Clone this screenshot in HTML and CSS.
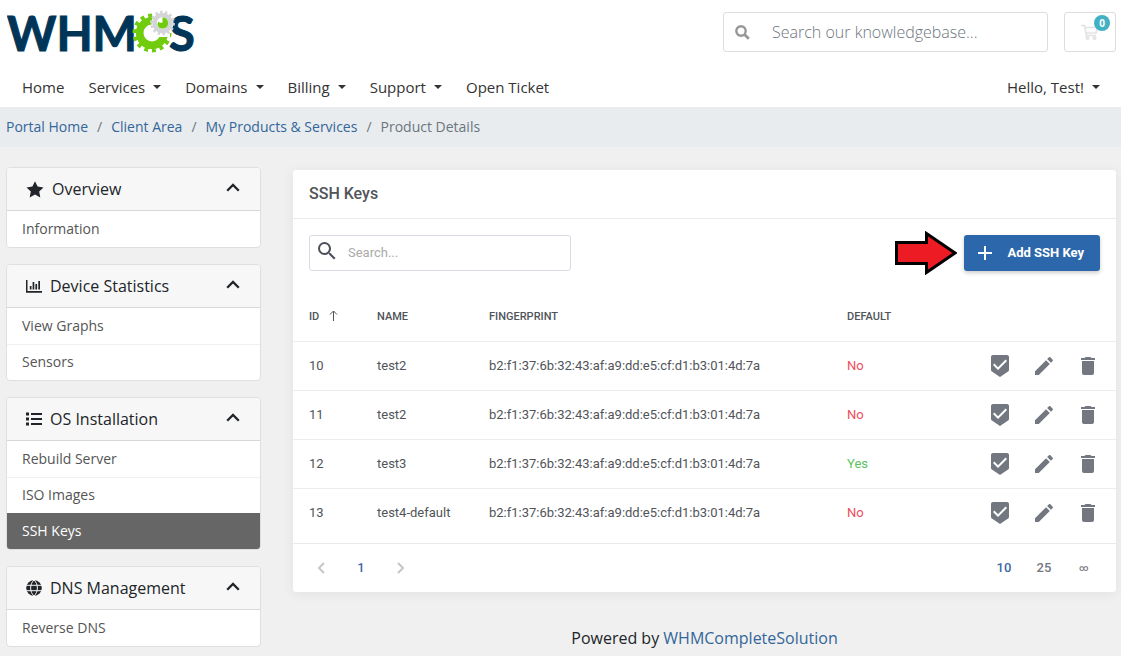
FILE: index.html
```html
<!DOCTYPE html>
<html lang="en">
<head>
<meta charset="utf-8">
<meta name="viewport" content="width=device-width, initial-scale=1">
<title>Product Details - SSH Keys</title>
<link rel="stylesheet" href="styles.css">
</head>
<body>
<svg class="sprite" aria-hidden="true">
  <symbol id="chevron-up" viewBox="0 0 14 9"><path d="M1.2 7.8 7 2l5.8 5.8" fill="none" stroke="currentColor" stroke-width="2.3"/></symbol>
  <symbol id="default" viewBox="0 0 24 24"><path d="M19 1H5c-1.1 0-1.99.9-1.99 2L3 15.93c0 .69.35 1.3.88 1.66L12 23l8.11-5.41c.53-.36.88-.97.88-1.66L21 3c0-1.1-.9-2-2-2zm-9 15l-5-5 1.41-1.41L10 13.17l7.59-7.59L19 7l-9 9z"/></symbol>
  <symbol id="pencil" viewBox="0 0 24 24"><path d="M20.71 7.04c.39-.39.39-1.04 0-1.41l-2.34-2.34c-.37-.39-1.02-.39-1.41 0l-1.84 1.83 3.75 3.75M3 17.25V21h3.75L17.81 9.93l-3.75-3.75L3 17.25z"/></symbol>
  <symbol id="trash" viewBox="0 0 24 24"><path d="M19 4h-3.5l-1-1h-5l-1 1H5v2h14M6 19a2 2 0 0 0 2 2h8a2 2 0 0 0 2-2V7H6v12z"/></symbol>
</svg>

<header class="header">
  <div class="topbar">
    <a class="logo" href="#" aria-label="WHMCS">
      <svg width="200" height="64" viewBox="0 -8 200 64">
        <text class="logo-text" x="0" y="43">WHM</text>
        <text class="logo-text" x="162" y="43">S</text>
        <g fill="none" stroke="#70cc0c">
          <circle cx="145" cy="25" r="12.3" stroke-width="7.6"/>
          <circle cx="145" cy="25" r="17" stroke-width="5" pathLength="28" stroke-dasharray="1 1"/>
        </g>
        <path d="M148 23h15v6h-13z" fill="#fff"/>
        <circle cx="155.500" cy="15" r="11" fill="#fff"/>
        <g fill="none" stroke="#d3d5d7">
          <circle cx="155.500" cy="15" r="8" stroke-width="4.600"/>
          <circle cx="155.500" cy="15" r="10.800" stroke-width="3.200" pathLength="28" stroke-dasharray="1 1"/>
        </g>
        <path d="M151 13.500q2 2 4.500 1V9.500a5.500 5.500 0 1 1-5 7.500z" fill="#70cc0c"/>
      </svg>
    </a>
    <div class="tools">
      <form class="kb-search">
        <button type="button" aria-label="Search">
          <svg width="15" height="15" viewBox="0 0 15 15" fill="none" stroke="#979797"><circle cx="6" cy="6" r="4.700" stroke-width="2.400"/><path d="m9.500 9.500 4.300 4.300" stroke-width="2.800"/></svg>
        </button>
        <input type="text" placeholder="Search our knowledgebase..." aria-label="Search our knowledgebase">
      </form>
      <a class="cart" href="#" aria-label="Shopping cart">
        <svg width="18" height="16" viewBox="0 0 18 16" fill="none" stroke="#e3e3e6" stroke-width="1.700"><path d="M0 1.500h3.500l2 10h9.500M4 3.500h12.500l-1.500 5.500H5.300"/><circle cx="6.500" cy="14" r="1.200"/><circle cx="13.500" cy="14" r="1.200"/></svg>
        <span class="badge">0</span>
      </a>
    </div>
  </div>
  <nav class="nav">
    <a href="#">Home</a>
    <a class="drop" href="#">Services</a>
    <a class="drop" href="#">Domains</a>
    <a class="drop" href="#">Billing</a>
    <a class="drop" href="#">Support</a>
    <a href="#">Open Ticket</a>
    <a class="drop account" href="#">Hello, Test!</a>
  </nav>
</header>

<nav aria-label="Breadcrumb">
  <ol class="breadcrumb">
    <li><a href="#">Portal Home</a></li>
    <li><a href="#">Client Area</a></li>
    <li><a href="#">My Products &amp; Services</a></li>
    <li>Product Details</li>
  </ol>
</nav>

<div class="layout">
  <aside class="sidebar">
    <section class="card">
      <button class="card-head" type="button">
        <svg width="18" height="17" viewBox="0 0 18 17"><path fill="currentColor" d="m9 .3 2.600 5.300 5.900.8-4.300 4.100 1.100 5.900L9 13.600l-5.300 2.800 1.100-5.900L.5 6.400l5.900-.8z"/></svg>
        <span>Overview</span>
        <svg class="chev" width="14" height="9"><use href="#chevron-up"/></svg>
      </button>
      <a class="item" href="#">Information</a>
    </section>
    <section class="card">
      <button class="card-head" type="button">
        <svg width="16" height="13" viewBox="0 0 16 13" fill="currentColor"><path d="M0 0h1.500v11H16v1.700H0zM3.800 6h1.700v3.500H3.800zM6.600 2h1.700v7.500H6.600zM9.400 4h1.700v5.500H9.400zM12.300 1H14v8.500h-1.700z"/></svg>
        <span>Device Statistics</span>
        <svg class="chev" width="14" height="9"><use href="#chevron-up"/></svg>
      </button>
      <a class="item" href="#">View Graphs</a>
      <a class="item" href="#">Sensors</a>
    </section>
    <section class="card">
      <button class="card-head" type="button">
        <svg width="16" height="14" viewBox="0 0 16 14" fill="currentColor"><path d="M0 .5h3v3H0zM0 5.500h3v3H0zM0 10.500h3v3H0zM5 1h11v2H5zM5 6h11v2H5zM5 11h11v2H5z"/></svg>
        <span>OS Installation</span>
        <svg class="chev" width="14" height="9"><use href="#chevron-up"/></svg>
      </button>
      <a class="item" href="#">Rebuild Server</a>
      <a class="item" href="#">ISO Images</a>
      <a class="item active" href="#">SSH Keys</a>
    </section>
    <section class="card">
      <button class="card-head" type="button">
        <svg width="16" height="16" viewBox="0 0 16 16"><circle cx="8" cy="8" r="7.800" fill="currentColor"/><path d="M0 5.300h16M0 10.700h16M8 0C3.500 4 3.500 12 8 16M8 0c4.500 4 4.500 12 0 16" fill="none" stroke="#f7f7f7"/></svg>
        <span>DNS Management</span>
        <svg class="chev" width="14" height="9"><use href="#chevron-up"/></svg>
      </button>
      <a class="item" href="#">Reverse DNS</a>
    </section>
  </aside>

  <main class="main">
    <section class="panel">
      <h1>SSH Keys</h1>
      <div class="toolbar">
        <label class="table-search">
          <svg width="24" height="24" viewBox="0 0 24 24" fill="#4b4f58"><path d="M9.500 3A6.500 6.500 0 0 1 16 9.500c0 1.610-.59 3.090-1.560 4.230l.27.270h.790l5 5-1.500 1.500-5-5v-.790l-.270-.270A6.516 6.516 0 0 1 9.500 16a6.500 6.500 0 0 1 0-13m0 2C7 5 5 7 5 9.500S7 14 9.500 14 14 12 14 9.500 12 5 9.500 5z"/></svg>
          <input type="text" placeholder="Search..." aria-label="Search SSH keys">
        </label>
        <svg class="pointer" width="62" height="44" viewBox="0 0 62 44" aria-hidden="true"><path d="M1.500 11.500h30v-9l28.500 19.500-28.500 19.500v-9h-30z" fill="#ed1c24" stroke="#000" stroke-width="3"/></svg>
        <button class="add" type="button">
          <svg width="16" height="16" viewBox="0 0 16 16"><path d="M8 1v14M1 8h14" stroke="#fff" stroke-width="2"/></svg>
          Add SSH Key
        </button>
      </div>
      <table>
        <colgroup><col class="c-id"><col class="c-name"><col class="c-print"><col class="c-default"><col class="c-actions"></colgroup>
        <thead>
          <tr>
            <th>ID <svg class="sort" width="9" height="11" viewBox="0 0 9 11" fill="none" stroke="currentColor"><path d="M4.500 11V1M1 4.500 4.500 1 8 4.500"/></svg></th>
            <th>NAME</th><th>FINGERPRINT</th><th>DEFAULT</th><th></th>
          </tr>
        </thead>
        <tbody>
          <tr>
            <td>10</td><td>test2</td><td>b2:f1:37:6b:32:43:af:a9:dd:e5:cf:d1:b3:01:4d:7a</td><td class="no">No</td>
            <td><div class="actions"><button type="button" aria-label="Set default"><svg><use href="#default"/></svg></button><button type="button" aria-label="Edit"><svg><use href="#pencil"/></svg></button><button type="button" aria-label="Delete"><svg><use href="#trash"/></svg></button></div></td>
          </tr>
          <tr>
            <td>11</td><td>test2</td><td>b2:f1:37:6b:32:43:af:a9:dd:e5:cf:d1:b3:01:4d:7a</td><td class="no">No</td>
            <td><div class="actions"><button type="button" aria-label="Set default"><svg><use href="#default"/></svg></button><button type="button" aria-label="Edit"><svg><use href="#pencil"/></svg></button><button type="button" aria-label="Delete"><svg><use href="#trash"/></svg></button></div></td>
          </tr>
          <tr>
            <td>12</td><td>test3</td><td>b2:f1:37:6b:32:43:af:a9:dd:e5:cf:d1:b3:01:4d:7a</td><td class="yes">Yes</td>
            <td><div class="actions"><button type="button" aria-label="Set default"><svg><use href="#default"/></svg></button><button type="button" aria-label="Edit"><svg><use href="#pencil"/></svg></button><button type="button" aria-label="Delete"><svg><use href="#trash"/></svg></button></div></td>
          </tr>
          <tr>
            <td>13</td><td>test4-default</td><td>b2:f1:37:6b:32:43:af:a9:dd:e5:cf:d1:b3:01:4d:7a</td><td class="no">No</td>
            <td><div class="actions"><button type="button" aria-label="Set default"><svg><use href="#default"/></svg></button><button type="button" aria-label="Edit"><svg><use href="#pencil"/></svg></button><button type="button" aria-label="Delete"><svg><use href="#trash"/></svg></button></div></td>
          </tr>
        </tbody>
      </table>
      <div class="pager">
        <div class="pages">
          <button type="button" aria-label="Previous page"><svg width="8" height="12" viewBox="0 0 8 12"><path d="M7 1 2 6l5 5" fill="none" stroke="#c4c6ca" stroke-width="2"/></svg></button>
          <button class="current" type="button">1</button>
          <button type="button" aria-label="Next page"><svg width="8" height="12" viewBox="0 0 8 12"><path d="m1 1 5 5-5 5" fill="none" stroke="#c4c6ca" stroke-width="2"/></svg></button>
        </div>
        <div class="sizes">
          <button class="current" type="button">10</button>
          <button type="button">25</button>
          <button class="all" type="button">∞</button>
        </div>
      </div>
    </section>
    <footer class="footer">Powered by <a href="#">WHMCompleteSolution</a></footer>
  </main>
</div>
</body>
</html>
```

FILE: styles.css
```css
* { box-sizing: border-box; }
body {
  margin: 0;
  background: #f0f0f0;
  color: #212529;
  font: 14px/20px "Open Sans", sans-serif;
}
a { color: inherit; text-decoration: none; }
button { border: 0; padding: 0; background: none; color: inherit; font: inherit; cursor: pointer; }
input { font: inherit; outline: 0; }
svg { flex: none; display: block; }
.sprite { position: absolute; width: 0; height: 0; }

.header { background: #fff; }
.topbar {
  display: flex;
  justify-content: space-between;
  align-items: center;
  height: 64px;
  padding: 0 5px 0 7px;
}
.logo-text { font: 700 47px Lato, sans-serif; fill: #003557; stroke: #003557; stroke-width: 1px; }
.tools { display: flex; gap: 16px; }
.kb-search {
  display: flex;
  align-items: center;
  width: 325px;
  height: 40px;
  border: 1px solid #ddd;
  border-radius: 3px;
}
.kb-search button { display: grid; place-items: center; width: 36px; height: 38px; }
.kb-search input {
  flex: 1;
  min-width: 0;
  padding: 0 12px;
  border: 0;
  background: none;
  font-size: 16px;
  font-weight: 300;
}
.kb-search input::placeholder { color: #6c757d; opacity: 1; }
.cart {
  position: relative;
  display: grid;
  place-items: center;
  width: 52px;
  height: 40px;
  border: 1px solid #ddd;
  border-radius: 3px;
}
.badge {
  position: absolute;
  top: 2px;
  right: 5px;
  width: 16px;
  border-radius: 8px;
  background: #42b1c4;
  color: #fff;
  font-size: 10px;
  font-weight: 700;
  line-height: 16px;
  text-align: center;
}
.nav {
  display: flex;
  align-items: center;
  gap: 24px;
  height: 43px;
  padding: 2px 21px 0 22px;
  color: #333;
  font-size: 15px;
}
.drop { display: flex; align-items: center; gap: 8px; }
.drop::after {
  content: "";
  border: 4px solid transparent;
  border-top-color: currentColor;
  border-bottom: 0;
}
.account { margin-left: auto; }

.breadcrumb {
  display: flex;
  margin: 0;
  padding: 10px 6px;
  list-style: none;
  background: #e8ecef;
  color: #6c757d;
}
.breadcrumb a { color: #336699; }
.breadcrumb li + li::before { content: "/"; padding: 0 9px; }

.layout {
  display: grid;
  grid-template-columns: 255px minmax(0, 1fr);
  gap: 32px;
  padding: 20px 5px 8px 6px;
}
.sidebar { display: flex; flex-direction: column; gap: 16px; }
.card { border: 1px solid #dfdfdf; border-radius: 4px; background: #fff; overflow: hidden; }
.card-head {
  display: flex;
  align-items: center;
  gap: 8px;
  width: 100%;
  height: 43px;
  padding: 0 20px 0 19px;
  border-bottom: 1px solid #d8d8d8;
  background: #f7f7f7;
  font-size: 16px;
}
.chev { margin: 0 0 4px auto; }
.item { display: block; height: 36px; padding: 8px 15px; color: #555; }
.item + .item { padding-top: 7px; border-top: 1px solid #f0f0f0; }
.item.active { background: #666; border-color: #666; color: #fff; }

.main { padding-top: 3px; }
.panel {
  border-radius: 3px;
  background: #fff;
  box-shadow: 0 2px 12px rgba(60, 60, 90, .08);
  color: #505459;
  font: 13px/20px Roboto, sans-serif;
}
.panel h1 {
  margin: 0;
  padding: 14px 16px;
  border-bottom: 1px solid #e9eaec;
  font-size: 16px;
  font-weight: 500;
}
.toolbar { display: flex; align-items: center; padding: 12px 16px; }
.table-search {
  display: flex;
  gap: 9px;
  width: 262px;
  height: 36px;
  margin-right: auto;
  padding: 3px 5px 5px;
  border: 1px solid #dadae5;
  border-radius: 3px;
}
.table-search input { flex: 1; min-width: 0; padding: 2px 0 0; border: 0; background: none; }
.table-search input::placeholder { color: #aaa; opacity: 1; }
.pointer { margin-right: 7px; }
.add {
  display: flex;
  align-items: center;
  gap: 14px;
  height: 36px;
  padding: 0 16px 0 13px;
  border-radius: 3px;
  background: #2c67ab;
  box-shadow: 0 2px 4px rgba(0, 0, 0, .2);
  color: #fff;
  font-weight: 700;
}
table { width: 100%; border-collapse: collapse; table-layout: fixed; }
.c-id { width: 84px; }
.c-name { width: 112px; }
.c-default { width: 100px; }
.c-actions { width: 169px; }
th { height: 54px; padding: 6px 0 0; font-size: 11px; font-weight: 500; text-align: left; }
td { height: 49px; padding: 0; border-top: 1px solid #ebecee; }
th:first-child, td:first-child { padding-left: 16px; }
.sort { display: inline-block; margin-left: 7px; vertical-align: -1px; }
.no { color: #ef4d5a; }
.yes { color: #5bc25f; }
.actions { display: flex; justify-content: flex-end; gap: 20px; padding-right: 16px; }
.actions svg { width: 24px; height: 24px; fill: #737780; }
.pager {
  display: flex;
  justify-content: space-between;
  margin-top: 6px;
  padding: 8px 12px 8px 8px;
  border-top: 1px solid #e9eaec;
  font-weight: 500;
  color: #73777f;
}
.pages, .sizes { display: flex; }
.pager button { display: grid; place-items: center; width: 40px; height: 32px; }
.pager .current { color: #4068a5; }
.pager .all { font-size: 9px; }
.footer { padding: 34px 0 0; font-size: 16px; line-height: 24px; text-align: center; }
.footer a { color: #336699; }
```
